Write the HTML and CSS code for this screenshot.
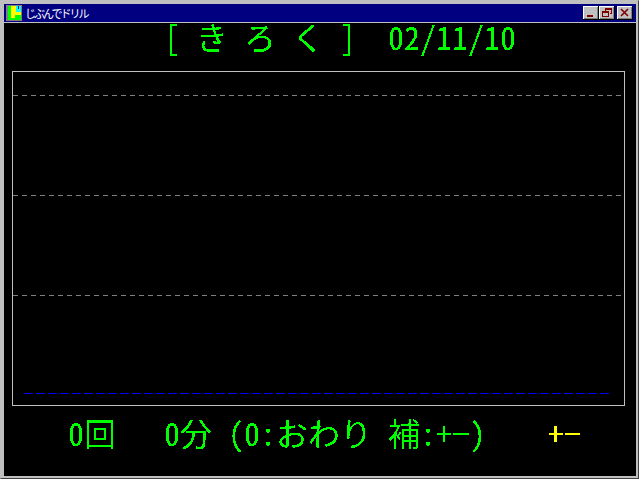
FILE: index.html
```html
<!DOCTYPE html>
<html lang="ja">
<head>
    <meta charset="UTF-8">
    <title>じぶんでドリル</title>
    <link rel="stylesheet" href="styles.css">
</head>
<body>
    <svg class="defs" width="0" height="0">
        <filter id="crisp" x="0" y="0" width="100%" height="100%">
            <feComponentTransfer><feFuncA type="discrete" tableValues="0 0 1 1"/></feComponentTransfer>
        </filter>
    </svg>
    <div class="window">
        <div class="titlebar">
            <svg class="app-icon" width="16" height="16" viewBox="0 0 16 16" shape-rendering="crispEdges">
                <rect width="16" height="16" fill="#808080"/>
                <rect x="2" y="1" width="13" height="14" fill="#00ff00"/>
                <rect x="5" y="1" width="4" height="12" fill="#ffff00"/>
                <rect x="9" y="7" width="6" height="3" fill="#ffff00"/>
                <rect x="9" y="1" width="1" height="6" fill="#ffff00"/>
                <rect x="10" y="1" width="5" height="6" fill="#00ffff"/>
                <rect x="12" y="1" width="1" height="3" fill="#000080"/>
            </svg>
            <span class="app-name">じぶんでドリル</span>
            <div class="controls">
                <button class="ctl">
                    <svg width="16" height="14" viewBox="0 0 16 14" shape-rendering="crispEdges"><rect x="4" y="9" width="6" height="2" fill="#800000"/></svg>
                </button>
                <button class="ctl">
                    <svg width="16" height="14" viewBox="0 0 16 14" shape-rendering="crispEdges" fill="none" stroke="#800000"><path d="M6.5 4.5V2.5H12.5V7.5H10.5"/><path d="M6 3H12"/><rect x="3.5" y="5.5" width="6" height="5"/><path d="M3 6H10"/></svg>
                </button>
                <button class="ctl ctl-close">
                    <svg width="16" height="14" viewBox="0 0 16 14" fill="none" stroke="#800000" stroke-width="1.6"><path d="M4 3L11 10M11 3L4 10"/></svg>
                </button>
            </div>
        </div>
        <div class="screen">
            <h1 class="heading">[ き ろ く ]  02/11/10</h1>
            <div class="chart">
                <div class="grid-line"></div>
                <div class="grid-line"></div>
                <div class="grid-line"></div>
                <div class="base-line"></div>
            </div>
            <div class="status">0回   0分 (0:おわり 補:+−)    <span class="keys">+−</span></div>
        </div>
    </div>
</body>
</html>
```

FILE: styles.css
```css
* {
    margin: 0;
    padding: 0;
    box-sizing: border-box;
}
html, body {
    width: 639px;
    height: 479px;
    overflow: hidden;
    background: #000;
}
.defs {
    position: absolute;
}
.window {
    width: 639px;
    height: 479px;
    display: flex;
    flex-direction: column;
    background: #c0c0c0;
    border: 1px solid;
    border-color: #c0c0c0 #404040 #404040 #c0c0c0;
    padding: 3px 2px 2px 3px;
}
.titlebar {
    height: 18px;
    flex: none;
    background: #000080;
    display: flex;
    align-items: center;
    padding: 0 3px 0 2px;
}
.app-icon {
    display: block;
}
.app-name {
    color: #fff;
    font: 11px "Noto Sans CJK JP", sans-serif;
    letter-spacing: -2px;
    margin-left: 3px;
}
.controls {
    margin-left: auto;
    display: flex;
}
.ctl {
    width: 16px;
    height: 14px;
    background: #c0c0c0;
    border: 0;
    box-shadow: inset -1px -1px 0 #000, inset 1px 1px 0 #fff, inset -2px -2px 0 #808080;
    display: block;
}
.ctl svg {
    display: block;
}
.ctl-close {
    margin-left: 2px;
}
.screen {
    flex: 1;
    background: #000;
    border-top: 1px solid #c0c0c0;
    color: #00ff00;
    font-family: "Noto Sans CJK JP", sans-serif;
    font-size: 32px;
    font-feature-settings: "hwid";
    display: flex;
    flex-direction: column;
}
.heading {
    height: 48px;
    font-size: 32px;
    font-weight: normal;
    line-height: 27px;
    padding-left: 160px;
    white-space: pre;
    filter: url(#crisp);
}
.chart {
    margin-left: 8px;
    width: 613px;
    height: 335px;
    border: 1px solid #c0c0c0;
    position: relative;
    padding-top: 23px;
}
.grid-line {
    height: 100px;
    background: repeating-linear-gradient(90deg, #808080 0 5px, transparent 5px 9px) top left / 100% 1px no-repeat;
}
.base-line {
    position: absolute;
    left: 11px;
    right: 15px;
    top: 321px;
    height: 1px;
    background: repeating-linear-gradient(90deg, #0000ff 0 9px, transparent 9px 12px);
}
.status {
    padding: 6px 0 0 64px;
    line-height: 40px;
    white-space: pre;
    filter: url(#crisp);
}
.keys {
    color: #ffff00;
    margin-left: -2px;
}
```
